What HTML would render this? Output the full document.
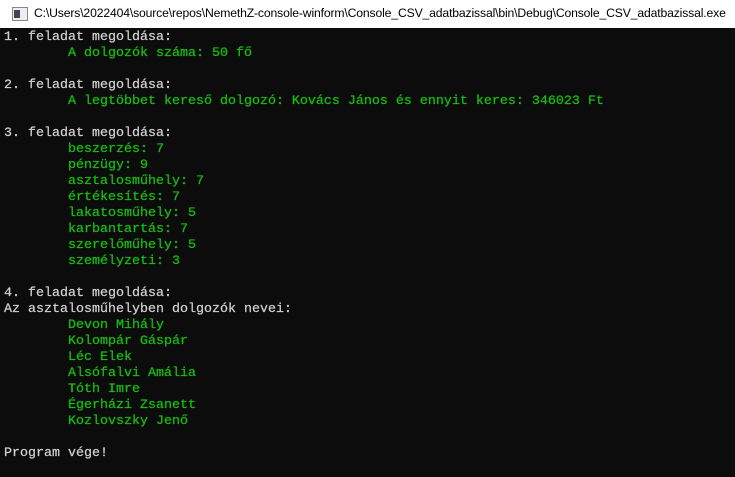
<!DOCTYPE html>
<html><head><meta charset="utf-8"><style>
html,body{margin:0;padding:0;width:735px;height:477px;overflow:hidden;background:#0c0c0c}
#title{position:absolute;left:0;top:0;width:735px;height:28px;background:#fff;}
#title span{position:absolute;left:34px;top:6px;font:12.2px "Liberation Sans",sans-serif;color:#000;letter-spacing:-0.15px}
#icon{position:absolute;left:12px;top:7px;width:14px;height:12px;border:1px solid #888;background:#eee}
#icon:after{content:"";position:absolute;left:1px;top:2px;width:6px;height:8px;background:#445}
pre{position:absolute;left:4px;top:30px;margin:0;font:13.33px/16px "Liberation Mono",monospace;color:#d0d0d0;tab-size:8;-webkit-text-stroke:0.25px}
.g{color:#16c00e}
</style></head><body>
<div id="title"><div id="icon"></div><span>C:\Users\2022404\source\repos\NemethZ-console-winform\Console_CSV_adatbazissal\bin\Debug\Console_CSV_adatbazissal.exe</span></div>
<pre>1. feladat megoldása:
<span class="g">        A dolgozók száma: 50 fő</span>

2. feladat megoldása:
<span class="g">        A legtöbbet kereső dolgozó: Kovács János és ennyit keres: 346023 Ft</span>

3. feladat megoldása:
<span class="g">        beszerzés: 7
        pénzügy: 9
        asztalosműhely: 7
        értékesítés: 7
        lakatosműhely: 5
        karbantartás: 7
        szerelőműhely: 5
        személyzeti: 3</span>

4. feladat megoldása:
Az asztalosműhelyben dolgozók nevei:
<span class="g">        Devon Mihály
        Kolompár Gáspár
        Léc Elek
        Alsófalvi Amália
        Tóth Imre
        Égerházi Zsanett
        Kozlovszky Jenő</span>

Program vége!</pre>
</body></html>
